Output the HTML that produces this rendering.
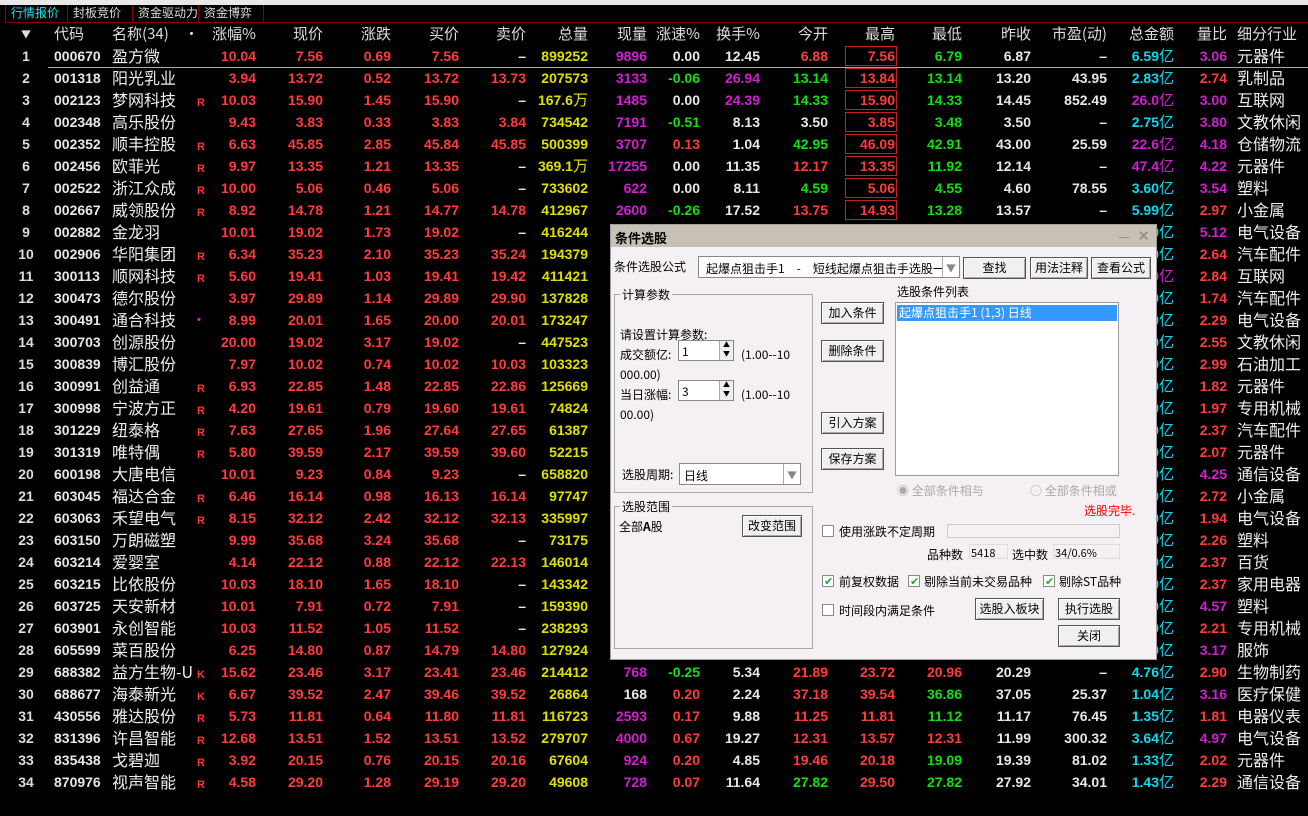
<!DOCTYPE html><html><head><meta charset="utf-8"><style>
*{margin:0;padding:0;box-sizing:border-box}
body{width:1308px;height:816px;background:#000;position:relative;overflow:hidden;font-family:"Liberation Sans","Noto Sans CJK SC",sans-serif;color:#e8e8e8}
.top{position:absolute;left:0;top:0;width:1308px;height:5px;background:#e8e8e8}
.tabs{position:absolute;left:5px;top:5px;width:1303px;height:18px;border-left:1px solid #800;border-bottom:1px solid #800}
.tab{position:absolute;top:0;height:17px;font-size:12px;line-height:17px;border-right:1px solid #800;padding-left:5px;color:#ddd;font-family:"WenQuanYi Zen Hei",sans-serif;white-space:nowrap;overflow:hidden}
.row{position:absolute;left:0;width:1308px;height:22px;font-weight:bold;font-size:14px}
.row span{position:absolute;top:0;line-height:22px;white-space:nowrap}
.row span span{position:static}
.hd span{font-weight:normal;font-size:15px;color:#ddd;font-family:"WenQuanYi Zen Hei","Noto Sans CJK SC",sans-serif}
.i{left:16px;width:20px;text-align:center;color:#ddd}
.cd{left:54px;color:#e8e8e8}
.nm{left:112px;font-size:16px;font-weight:normal;font-family:"WenQuanYi Zen Hei","Noto Sans CJK SC",sans-serif;color:#eee;line-height:21px!important}
.mk{left:197px;font-size:11px;color:#ff3333;top:3px!important}
.f1{right:1052px}.f2{right:985px}.f3{right:917px}.f4{right:849px}.f5{right:782px}.f6{right:720px}.f7{right:661px}.f8{right:608px}.f9{right:548px}.f10{right:480px}.f11{right:413px}.f12{right:346px}.f13{right:277px}.f14{right:201px}.f15{right:134px}.f16{right:81px}
.hy{left:1237px;font-size:16px;font-weight:normal;font-family:"WenQuanYi Zen Hei","Noto Sans CJK SC",sans-serif;color:#eee;line-height:21px!important}
.yi{font-weight:normal;font-family:"WenQuanYi Zen Hei",sans-serif;font-size:15px}
.bx{left:845px;width:52px;top:1px!important;height:20px;border:1px solid #c02020}
.r{color:#ff3c3c}.g{color:#10e010}.w{color:#e8e8e8}.y{color:#e0e000}.m{color:#d020d0}.c{color:#10d8f0}
.dlg{position:absolute;left:610px;top:224px;width:547px;height:436px;background:#f4f0f4;border:1px solid #a0a0a0;font-family:"WenQuanYi Zen Hei","Noto Sans CJK SC",sans-serif;font-size:12px;color:#000}
.dlg *{position:absolute;white-space:nowrap}
.dlg span *{position:static}
.tt{left:0;top:0;width:545px;height:22px;background:#c8c0b4;font-weight:bold;padding:3px 4px;font-size:13px}
.btn{background:#f0f0f0;border:1px solid #555;box-shadow:inset 1px 1px #fff,inset -1px -1px #aaa;text-align:center;line-height:19px;height:22px}
.gb{border:1px solid #a8a8a8}
.gt{background:#f4f0f4;padding:0 2px;top:-9px;left:5px}
.ed{background:#fff;border:1px solid #888}
.cb{width:12px;height:12px;background:#fff;border:1px solid #888}
.ck{color:#2a2;font-size:11px;line-height:10px;left:1px;top:0}
</style></head><body>
<div class="top"></div>
<div class="tabs">
<div class="tab" style="left:0;width:62px;color:#20e0f0">行情报价</div>
<div class="tab" style="left:62px;width:65px">封板竞价</div>
<div class="tab" style="left:127px;width:66px">资金驱动力</div>
<div class="tab" style="left:193px;width:65px">资金博弈</div>
</div>
<div class="row hd" style="top:23px"><span class="i" style="font-size:10px">▼</span><span class="cd">代码</span><span class="nm" style="font-size:15px">名称(34)</span><span style="left:184px">•</span><span class="f1">涨幅%</span><span class="f2">现价</span><span class="f3">涨跌</span><span class="f4">买价</span><span class="f5">卖价</span><span class="f6">总量</span><span class="f7">现量</span><span class="f8">涨速%</span><span class="f9">换手%</span><span class="f10">今开</span><span class="f11">最高</span><span class="f12">最低</span><span class="f13">昨收</span><span class="f14">市盈(动)</span><span class="f15">总金额</span><span class="f16">量比</span><span class="hy" style="font-size:15px">细分行业</span></div>
<div style="position:absolute;left:48px;top:67px;width:1260px;height:1px;background:#c0c000"></div>

<div class="row" style="top:45px"><span class="i">1</span><span class="cd">000670</span><span class="nm">盈方微</span><span class="f1 r">10.04</span><span class="f2 r">7.56</span><span class="f3 r">0.69</span><span class="f4 r">7.56</span><span class="f5 w">–</span><span class="f6 y">899252</span><span class="f7 m">9896</span><span class="f8 w">0.00</span><span class="f9 w">12.45</span><span class="f10 r">6.88</span><span class="bx"></span><span class="f11 r">7.56</span><span class="f12 g">6.79</span><span class="f13 w">6.87</span><span class="f14 w">–</span><span class="f15 c">6.59<span class="yi">亿</span></span><span class="f16 m">3.06</span><span class="hy">元器件</span></div>
<div class="row" style="top:67px"><span class="i">2</span><span class="cd">001318</span><span class="nm">阳光乳业</span><span class="f1 r">3.94</span><span class="f2 r">13.72</span><span class="f3 r">0.52</span><span class="f4 r">13.72</span><span class="f5 r">13.73</span><span class="f6 y">207573</span><span class="f7 m">3133</span><span class="f8 g">-0.06</span><span class="f9 m">26.94</span><span class="f10 g">13.14</span><span class="bx"></span><span class="f11 r">13.84</span><span class="f12 g">13.14</span><span class="f13 w">13.20</span><span class="f14 w">43.95</span><span class="f15 c">2.83<span class="yi">亿</span></span><span class="f16 r">2.74</span><span class="hy">乳制品</span></div>
<div class="row" style="top:89px"><span class="i">3</span><span class="cd">002123</span><span class="nm">梦网科技</span><span class="mk">R</span><span class="f1 r">10.03</span><span class="f2 r">15.90</span><span class="f3 r">1.45</span><span class="f4 r">15.90</span><span class="f5 w">–</span><span class="f6 y">167.6<span class="yi">万</span></span><span class="f7 m">1485</span><span class="f8 w">0.00</span><span class="f9 m">24.39</span><span class="f10 g">14.33</span><span class="bx"></span><span class="f11 r">15.90</span><span class="f12 g">14.33</span><span class="f13 w">14.45</span><span class="f14 w">852.49</span><span class="f15 m">26.0<span class="yi">亿</span></span><span class="f16 m">3.00</span><span class="hy">互联网</span></div>
<div class="row" style="top:111px"><span class="i">4</span><span class="cd">002348</span><span class="nm">高乐股份</span><span class="f1 r">9.43</span><span class="f2 r">3.83</span><span class="f3 r">0.33</span><span class="f4 r">3.83</span><span class="f5 r">3.84</span><span class="f6 y">734542</span><span class="f7 m">7191</span><span class="f8 g">-0.51</span><span class="f9 w">8.13</span><span class="f10 w">3.50</span><span class="bx"></span><span class="f11 r">3.85</span><span class="f12 g">3.48</span><span class="f13 w">3.50</span><span class="f14 w">–</span><span class="f15 c">2.75<span class="yi">亿</span></span><span class="f16 m">3.80</span><span class="hy">文教休闲</span></div>
<div class="row" style="top:133px"><span class="i">5</span><span class="cd">002352</span><span class="nm">顺丰控股</span><span class="mk">R</span><span class="f1 r">6.63</span><span class="f2 r">45.85</span><span class="f3 r">2.85</span><span class="f4 r">45.84</span><span class="f5 r">45.85</span><span class="f6 y">500399</span><span class="f7 m">3707</span><span class="f8 r">0.13</span><span class="f9 w">1.04</span><span class="f10 g">42.95</span><span class="bx"></span><span class="f11 r">46.09</span><span class="f12 g">42.91</span><span class="f13 w">43.00</span><span class="f14 w">25.59</span><span class="f15 m">22.6<span class="yi">亿</span></span><span class="f16 m">4.18</span><span class="hy">仓储物流</span></div>
<div class="row" style="top:155px"><span class="i">6</span><span class="cd">002456</span><span class="nm">欧菲光</span><span class="mk">R</span><span class="f1 r">9.97</span><span class="f2 r">13.35</span><span class="f3 r">1.21</span><span class="f4 r">13.35</span><span class="f5 w">–</span><span class="f6 y">369.1<span class="yi">万</span></span><span class="f7 m">17255</span><span class="f8 w">0.00</span><span class="f9 w">11.35</span><span class="f10 r">12.17</span><span class="bx"></span><span class="f11 r">13.35</span><span class="f12 g">11.92</span><span class="f13 w">12.14</span><span class="f14 w">–</span><span class="f15 m">47.4<span class="yi">亿</span></span><span class="f16 m">4.22</span><span class="hy">元器件</span></div>
<div class="row" style="top:177px"><span class="i">7</span><span class="cd">002522</span><span class="nm">浙江众成</span><span class="mk">R</span><span class="f1 r">10.00</span><span class="f2 r">5.06</span><span class="f3 r">0.46</span><span class="f4 r">5.06</span><span class="f5 w">–</span><span class="f6 y">733602</span><span class="f7 m">622</span><span class="f8 w">0.00</span><span class="f9 w">8.11</span><span class="f10 g">4.59</span><span class="bx"></span><span class="f11 r">5.06</span><span class="f12 g">4.55</span><span class="f13 w">4.60</span><span class="f14 w">78.55</span><span class="f15 c">3.60<span class="yi">亿</span></span><span class="f16 m">3.54</span><span class="hy">塑料</span></div>
<div class="row" style="top:199px"><span class="i">8</span><span class="cd">002667</span><span class="nm">威领股份</span><span class="mk">R</span><span class="f1 r">8.92</span><span class="f2 r">14.78</span><span class="f3 r">1.21</span><span class="f4 r">14.77</span><span class="f5 r">14.78</span><span class="f6 y">412967</span><span class="f7 m">2600</span><span class="f8 g">-0.26</span><span class="f9 w">17.52</span><span class="f10 r">13.75</span><span class="bx"></span><span class="f11 r">14.93</span><span class="f12 g">13.28</span><span class="f13 w">13.57</span><span class="f14 w">–</span><span class="f15 c">5.99<span class="yi">亿</span></span><span class="f16 r">2.97</span><span class="hy">小金属</span></div>
<div class="row" style="top:221px"><span class="i">9</span><span class="cd">002882</span><span class="nm">金龙羽</span><span class="f1 r">10.01</span><span class="f2 r">19.02</span><span class="f3 r">1.73</span><span class="f4 r">19.02</span><span class="f5 w">–</span><span class="f6 y">416244</span><span class="f15 c">0.00<span class="yi">亿</span></span><span class="f16 m">5.12</span><span class="hy">电气设备</span></div>
<div class="row" style="top:243px"><span class="i">10</span><span class="cd">002906</span><span class="nm">华阳集团</span><span class="mk">R</span><span class="f1 r">6.34</span><span class="f2 r">35.23</span><span class="f3 r">2.10</span><span class="f4 r">35.23</span><span class="f5 r">35.24</span><span class="f6 y">194379</span><span class="f15 c">0.00<span class="yi">亿</span></span><span class="f16 r">2.64</span><span class="hy">汽车配件</span></div>
<div class="row" style="top:265px"><span class="i">11</span><span class="cd">300113</span><span class="nm">顺网科技</span><span class="mk">R</span><span class="f1 r">5.60</span><span class="f2 r">19.41</span><span class="f3 r">1.03</span><span class="f4 r">19.41</span><span class="f5 r">19.42</span><span class="f6 y">411421</span><span class="f15 m">0.00<span class="yi">亿</span></span><span class="f16 r">2.84</span><span class="hy">互联网</span></div>
<div class="row" style="top:287px"><span class="i">12</span><span class="cd">300473</span><span class="nm">德尔股份</span><span class="f1 r">3.97</span><span class="f2 r">29.89</span><span class="f3 r">1.14</span><span class="f4 r">29.89</span><span class="f5 r">29.90</span><span class="f6 y">137828</span><span class="f15 c">0.00<span class="yi">亿</span></span><span class="f16 r">1.74</span><span class="hy">汽车配件</span></div>
<div class="row" style="top:309px"><span class="i">13</span><span class="cd">300491</span><span class="nm">通合科技</span><span class="mk m" style="top:0!important">•</span><span class="f1 r">8.99</span><span class="f2 r">20.01</span><span class="f3 r">1.65</span><span class="f4 r">20.00</span><span class="f5 r">20.01</span><span class="f6 y">173247</span><span class="f15 c">0.00<span class="yi">亿</span></span><span class="f16 r">2.29</span><span class="hy">电气设备</span></div>
<div class="row" style="top:331px"><span class="i">14</span><span class="cd">300703</span><span class="nm">创源股份</span><span class="f1 r">20.00</span><span class="f2 r">19.02</span><span class="f3 r">3.17</span><span class="f4 r">19.02</span><span class="f5 w">–</span><span class="f6 y">447523</span><span class="f15 c">0.00<span class="yi">亿</span></span><span class="f16 r">2.55</span><span class="hy">文教休闲</span></div>
<div class="row" style="top:353px"><span class="i">15</span><span class="cd">300839</span><span class="nm">博汇股份</span><span class="f1 r">7.97</span><span class="f2 r">10.02</span><span class="f3 r">0.74</span><span class="f4 r">10.02</span><span class="f5 r">10.03</span><span class="f6 y">103323</span><span class="f15 c">0.00<span class="yi">亿</span></span><span class="f16 r">2.99</span><span class="hy">石油加工</span></div>
<div class="row" style="top:375px"><span class="i">16</span><span class="cd">300991</span><span class="nm">创益通</span><span class="mk">R</span><span class="f1 r">6.93</span><span class="f2 r">22.85</span><span class="f3 r">1.48</span><span class="f4 r">22.85</span><span class="f5 r">22.86</span><span class="f6 y">125669</span><span class="f15 c">0.00<span class="yi">亿</span></span><span class="f16 r">1.82</span><span class="hy">元器件</span></div>
<div class="row" style="top:397px"><span class="i">17</span><span class="cd">300998</span><span class="nm">宁波方正</span><span class="mk">R</span><span class="f1 r">4.20</span><span class="f2 r">19.61</span><span class="f3 r">0.79</span><span class="f4 r">19.60</span><span class="f5 r">19.61</span><span class="f6 y">74824</span><span class="f15 c">0.00<span class="yi">亿</span></span><span class="f16 r">1.97</span><span class="hy">专用机械</span></div>
<div class="row" style="top:419px"><span class="i">18</span><span class="cd">301229</span><span class="nm">纽泰格</span><span class="mk">R</span><span class="f1 r">7.63</span><span class="f2 r">27.65</span><span class="f3 r">1.96</span><span class="f4 r">27.64</span><span class="f5 r">27.65</span><span class="f6 y">61387</span><span class="f15 c">0.00<span class="yi">亿</span></span><span class="f16 r">2.37</span><span class="hy">汽车配件</span></div>
<div class="row" style="top:441px"><span class="i">19</span><span class="cd">301319</span><span class="nm">唯特偶</span><span class="mk">R</span><span class="f1 r">5.80</span><span class="f2 r">39.59</span><span class="f3 r">2.17</span><span class="f4 r">39.59</span><span class="f5 r">39.60</span><span class="f6 y">52215</span><span class="f15 c">0.00<span class="yi">亿</span></span><span class="f16 r">2.07</span><span class="hy">元器件</span></div>
<div class="row" style="top:463px"><span class="i">20</span><span class="cd">600198</span><span class="nm">大唐电信</span><span class="f1 r">10.01</span><span class="f2 r">9.23</span><span class="f3 r">0.84</span><span class="f4 r">9.23</span><span class="f5 w">–</span><span class="f6 y">658820</span><span class="f15 c">0.00<span class="yi">亿</span></span><span class="f16 m">4.25</span><span class="hy">通信设备</span></div>
<div class="row" style="top:485px"><span class="i">21</span><span class="cd">603045</span><span class="nm">福达合金</span><span class="mk">R</span><span class="f1 r">6.46</span><span class="f2 r">16.14</span><span class="f3 r">0.98</span><span class="f4 r">16.13</span><span class="f5 r">16.14</span><span class="f6 y">97747</span><span class="f15 c">0.00<span class="yi">亿</span></span><span class="f16 r">2.72</span><span class="hy">小金属</span></div>
<div class="row" style="top:507px"><span class="i">22</span><span class="cd">603063</span><span class="nm">禾望电气</span><span class="mk">R</span><span class="f1 r">8.15</span><span class="f2 r">32.12</span><span class="f3 r">2.42</span><span class="f4 r">32.12</span><span class="f5 r">32.13</span><span class="f6 y">335997</span><span class="f15 c">0.00<span class="yi">亿</span></span><span class="f16 r">1.94</span><span class="hy">电气设备</span></div>
<div class="row" style="top:529px"><span class="i">23</span><span class="cd">603150</span><span class="nm">万朗磁塑</span><span class="f1 r">9.99</span><span class="f2 r">35.68</span><span class="f3 r">3.24</span><span class="f4 r">35.68</span><span class="f5 w">–</span><span class="f6 y">73175</span><span class="f15 c">0.00<span class="yi">亿</span></span><span class="f16 r">2.26</span><span class="hy">塑料</span></div>
<div class="row" style="top:551px"><span class="i">24</span><span class="cd">603214</span><span class="nm">爱婴室</span><span class="f1 r">4.14</span><span class="f2 r">22.12</span><span class="f3 r">0.88</span><span class="f4 r">22.12</span><span class="f5 r">22.13</span><span class="f6 y">146014</span><span class="f15 c">0.00<span class="yi">亿</span></span><span class="f16 r">2.37</span><span class="hy">百货</span></div>
<div class="row" style="top:573px"><span class="i">25</span><span class="cd">603215</span><span class="nm">比依股份</span><span class="f1 r">10.03</span><span class="f2 r">18.10</span><span class="f3 r">1.65</span><span class="f4 r">18.10</span><span class="f5 w">–</span><span class="f6 y">143342</span><span class="f15 c">0.00<span class="yi">亿</span></span><span class="f16 r">2.37</span><span class="hy">家用电器</span></div>
<div class="row" style="top:595px"><span class="i">26</span><span class="cd">603725</span><span class="nm">天安新材</span><span class="f1 r">10.01</span><span class="f2 r">7.91</span><span class="f3 r">0.72</span><span class="f4 r">7.91</span><span class="f5 w">–</span><span class="f6 y">159390</span><span class="f15 c">0.00<span class="yi">亿</span></span><span class="f16 m">4.57</span><span class="hy">塑料</span></div>
<div class="row" style="top:617px"><span class="i">27</span><span class="cd">603901</span><span class="nm">永创智能</span><span class="f1 r">10.03</span><span class="f2 r">11.52</span><span class="f3 r">1.05</span><span class="f4 r">11.52</span><span class="f5 w">–</span><span class="f6 y">238293</span><span class="f15 c">0.00<span class="yi">亿</span></span><span class="f16 r">2.21</span><span class="hy">专用机械</span></div>
<div class="row" style="top:639px"><span class="i">28</span><span class="cd">605599</span><span class="nm">菜百股份</span><span class="f1 r">6.25</span><span class="f2 r">14.80</span><span class="f3 r">0.87</span><span class="f4 r">14.79</span><span class="f5 r">14.80</span><span class="f6 y">127924</span><span class="f15 c">0.00<span class="yi">亿</span></span><span class="f16 m">3.17</span><span class="hy">服饰</span></div>
<div class="row" style="top:661px"><span class="i">29</span><span class="cd">688382</span><span class="nm">益方生物-U</span><span class="mk">K</span><span class="f1 r">15.62</span><span class="f2 r">23.46</span><span class="f3 r">3.17</span><span class="f4 r">23.41</span><span class="f5 r">23.46</span><span class="f6 y">214412</span><span class="f7 m">768</span><span class="f8 g">-0.25</span><span class="f9 w">5.34</span><span class="f10 r">21.89</span><span class="f11 r">23.72</span><span class="f12 r">20.96</span><span class="f13 w">20.29</span><span class="f14 w">–</span><span class="f15 c">4.76<span class="yi">亿</span></span><span class="f16 r">2.90</span><span class="hy">生物制药</span></div>
<div class="row" style="top:683px"><span class="i">30</span><span class="cd">688677</span><span class="nm">海泰新光</span><span class="mk">K</span><span class="f1 r">6.67</span><span class="f2 r">39.52</span><span class="f3 r">2.47</span><span class="f4 r">39.46</span><span class="f5 r">39.52</span><span class="f6 y">26864</span><span class="f7 w">168</span><span class="f8 r">0.20</span><span class="f9 w">2.24</span><span class="f10 r">37.18</span><span class="f11 r">39.54</span><span class="f12 g">36.86</span><span class="f13 w">37.05</span><span class="f14 w">25.37</span><span class="f15 c">1.04<span class="yi">亿</span></span><span class="f16 m">3.16</span><span class="hy">医疗保健</span></div>
<div class="row" style="top:705px"><span class="i">31</span><span class="cd">430556</span><span class="nm">雅达股份</span><span class="mk">R</span><span class="f1 r">5.73</span><span class="f2 r">11.81</span><span class="f3 r">0.64</span><span class="f4 r">11.80</span><span class="f5 r">11.81</span><span class="f6 y">116723</span><span class="f7 m">2593</span><span class="f8 r">0.17</span><span class="f9 w">9.88</span><span class="f10 r">11.25</span><span class="f11 r">11.81</span><span class="f12 g">11.12</span><span class="f13 w">11.17</span><span class="f14 w">76.45</span><span class="f15 c">1.35<span class="yi">亿</span></span><span class="f16 r">1.81</span><span class="hy">电器仪表</span></div>
<div class="row" style="top:727px"><span class="i">32</span><span class="cd">831396</span><span class="nm">许昌智能</span><span class="mk">R</span><span class="f1 r">12.68</span><span class="f2 r">13.51</span><span class="f3 r">1.52</span><span class="f4 r">13.51</span><span class="f5 r">13.52</span><span class="f6 y">279707</span><span class="f7 m">4000</span><span class="f8 r">0.67</span><span class="f9 w">19.27</span><span class="f10 r">12.31</span><span class="f11 r">13.57</span><span class="f12 r">12.31</span><span class="f13 w">11.99</span><span class="f14 w">300.32</span><span class="f15 c">3.64<span class="yi">亿</span></span><span class="f16 m">4.97</span><span class="hy">电气设备</span></div>
<div class="row" style="top:749px"><span class="i">33</span><span class="cd">835438</span><span class="nm">戈碧迦</span><span class="mk">R</span><span class="f1 r">3.92</span><span class="f2 r">20.15</span><span class="f3 r">0.76</span><span class="f4 r">20.15</span><span class="f5 r">20.16</span><span class="f6 y">67604</span><span class="f7 m">924</span><span class="f8 r">0.20</span><span class="f9 w">4.85</span><span class="f10 r">19.46</span><span class="f11 r">20.18</span><span class="f12 g">19.09</span><span class="f13 w">19.39</span><span class="f14 w">81.02</span><span class="f15 c">1.33<span class="yi">亿</span></span><span class="f16 r">2.02</span><span class="hy">元器件</span></div>
<div class="row" style="top:771px"><span class="i">34</span><span class="cd">870976</span><span class="nm">视声智能</span><span class="mk">R</span><span class="f1 r">4.58</span><span class="f2 r">29.20</span><span class="f3 r">1.28</span><span class="f4 r">29.19</span><span class="f5 r">29.20</span><span class="f6 y">49608</span><span class="f7 m">728</span><span class="f8 r">0.07</span><span class="f9 w">11.64</span><span class="f10 g">27.82</span><span class="f11 r">29.50</span><span class="f12 g">27.82</span><span class="f13 w">27.92</span><span class="f14 w">34.01</span><span class="f15 c">1.43<span class="yi">亿</span></span><span class="f16 r">2.29</span><span class="hy">通信设备</span></div>

<div class="dlg">
<div class="tt">条件选股<span style="position:absolute;right:26px;top:1px;color:#888;font-weight:normal">—</span><span style="position:absolute;right:6px;top:0;color:#888;font-weight:normal;font-size:15px">✕</span></div>
<span style="left:3px;top:33px">条件选股公式</span>
<div class="ed" style="left:87px;top:31px;width:262px;height:22px"><span style="left:7px;top:3px">起爆点狙击手1　-　短线起爆点狙击手选股一号</span><div style="left:243px;top:0;width:17px;height:20px;background:#fff;border-left:1px solid #aaa"></div><span style="left:247px;top:3px;color:#888;font-size:10px">▼</span></div>
<div class="btn" style="left:352px;top:32px;width:63px">查找</div>
<div class="btn" style="left:419px;top:32px;width:58px">用法注释</div>
<div class="btn" style="left:480px;top:32px;width:60px">查看公式</div>
<div class="gb" style="left:3px;top:69px;width:199px;height:199px"><span class="gt">计算参数</span>
<span style="left:5px;top:31px">请设置计算参数:</span>
<span style="left:5px;top:51px">成交额亿:</span>
<div class="ed" style="left:63px;top:45px;width:56px;height:21px"><span style="left:3px;top:2px">1</span><div style="left:40px;top:0;width:14px;height:19px;background:#eee;border-left:1px solid #aaa;font-size:7px;line-height:9px;text-align:center">▲<br>▼</div></div>
<span style="left:126px;top:51px">(1.00--10</span>
<span style="left:5px;top:71px">000.00)</span>
<span style="left:5px;top:91px">当日涨幅:</span>
<div class="ed" style="left:63px;top:85px;width:56px;height:21px"><span style="left:3px;top:2px">3</span><div style="left:40px;top:0;width:14px;height:19px;background:#eee;border-left:1px solid #aaa;font-size:7px;line-height:9px;text-align:center">▲<br>▼</div></div>
<span style="left:126px;top:91px">(1.00--10</span>
<span style="left:5px;top:111px">00.00)</span>
<span style="left:7px;top:171px">选股周期:</span>
<div class="ed" style="left:64px;top:168px;width:122px;height:22px"><span style="left:4px;top:3px">日线</span><div style="left:103px;top:0;width:1px;height:20px;background:#aaa"></div><span style="left:107px;top:3px;color:#888;font-size:10px">▼</span></div>
</div>
<div class="gb" style="left:3px;top:281px;width:199px;height:143px"><span class="gt">选股范围</span>
<span style="left:4px;top:11px">全部<b>A</b>股</span>
<div class="btn" style="left:127px;top:8px;width:60px">改变范围</div>
</div>
<div class="btn" style="left:210px;top:77px;width:63px">加入条件</div>
<div class="btn" style="left:210px;top:115px;width:63px">删除条件</div>
<div class="btn" style="left:210px;top:187px;width:63px">引入方案</div>
<div class="btn" style="left:210px;top:223px;width:63px">保存方案</div>
<span style="left:286px;top:58px">选股条件列表</span>
<div class="ed" style="left:284px;top:77px;width:224px;height:174px;border-color:#999"><div style="left:1px;top:2px;width:220px;height:16px;background:#3399ff;color:#fff;padding-left:2px;line-height:16px">起爆点狙击手1 (1,3) 日线</div></div>
<span style="left:286px;top:257px;color:#aaa">◉ 全部条件相与</span>
<span style="left:419px;top:257px;color:#aaa">○ 全部条件相或</span>
<span style="left:473px;top:277px;color:#f00">选股完毕.</span>
<div class="cb" style="left:211px;top:300px"></div><span style="left:228px;top:298px">使用涨跌不定周期</span>
<div style="left:336px;top:299px;width:173px;height:14px;border:1px solid #ccc;background:#f4f0f4"></div>
<span style="left:316px;top:321px">品种数</span><div style="left:358px;top:319px;width:39px;height:15px;border:1px solid #ddd;font-size:11px;padding-left:1px">5418</div>
<span style="left:401px;top:321px">选中数</span><div style="left:442px;top:319px;width:67px;height:15px;border:1px solid #ddd;font-size:11px;padding-left:1px">34/0.6%</div>
<div class="cb" style="left:211px;top:350px"><span class="ck">✔</span></div><span style="left:228px;top:348px">前复权数据</span>
<div class="cb" style="left:297px;top:350px"><span class="ck">✔</span></div><span style="left:313px;top:348px">剔除当前未交易品种</span>
<div class="cb" style="left:432px;top:350px"><span class="ck">✔</span></div><span style="left:448px;top:348px">剔除ST品种</span>
<div class="cb" style="left:211px;top:379px"></div><span style="left:228px;top:377px">时间段内满足条件</span>
<div class="btn" style="left:364px;top:373px;width:69px">选股入板块</div>
<div class="btn" style="left:447px;top:373px;width:62px">执行选股</div>
<div class="btn" style="left:447px;top:400px;width:62px">关闭</div>
</div>
</body></html>
